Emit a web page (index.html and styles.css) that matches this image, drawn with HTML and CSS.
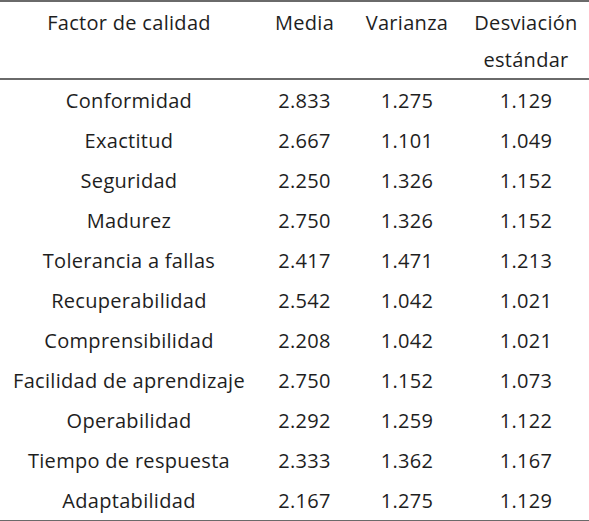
FILE: index.html
```html
<!DOCTYPE html>
<html lang="es">
<head>
<meta charset="utf-8">
<link rel="stylesheet" href="styles.css">
</head>
<body>
<table class="stats">
  <colgroup>
    <col class="c1"><col class="c2"><col class="c3"><col class="c4">
  </colgroup>
  <thead>
    <tr><th>Factor de calidad</th><th>Media</th><th>Varianza</th><th>Desviación estándar</th></tr>
  </thead>
  <tbody>
    <tr><td>Conformidad</td><td>2.833</td><td>1.275</td><td>1.129</td></tr>
    <tr><td>Exactitud</td><td>2.667</td><td>1.101</td><td>1.049</td></tr>
    <tr><td>Seguridad</td><td>2.250</td><td>1.326</td><td>1.152</td></tr>
    <tr><td>Madurez</td><td>2.750</td><td>1.326</td><td>1.152</td></tr>
    <tr><td>Tolerancia a fallas</td><td>2.417</td><td>1.471</td><td>1.213</td></tr>
    <tr><td>Recuperabilidad</td><td>2.542</td><td>1.042</td><td>1.021</td></tr>
    <tr><td>Comprensibilidad</td><td>2.208</td><td>1.042</td><td>1.021</td></tr>
    <tr><td>Facilidad de aprendizaje</td><td>2.750</td><td>1.152</td><td>1.073</td></tr>
    <tr><td>Operabilidad</td><td>2.292</td><td>1.259</td><td>1.122</td></tr>
    <tr><td>Tiempo de respuesta</td><td>2.333</td><td>1.362</td><td>1.167</td></tr>
    <tr><td>Adaptabilidad</td><td>2.167</td><td>1.275</td><td>1.129</td></tr>
  </tbody>
</table>
</body>
</html>
```
FILE: styles.css
```css
html, body { margin: 0; padding: 0; background: #fff; }
.stats {
  width: 589px;
  border-collapse: separate;
  border-spacing: 0;
  table-layout: fixed;
  font-family: "Open Sans", "Noto Sans", sans-serif;
  font-size: 20px;
  letter-spacing: 0.3px;
  color: #1e1e1e;
  border-top: 2px solid #6a6a6a;
  border-bottom: 2px solid #6a6a6a;
}
.c1 { width: 258px; }
.c2 { width: 93px; }
.c3 { width: 112px; }
.c4 { width: 126px; }
.stats th {
  font-weight: normal;
  text-align: center;
  vertical-align: top;
  line-height: 37px;
  padding: 2px 4px 0;
  height: 36px;
  border-bottom: 2px solid #6a6a6a;
}
.stats td {
  text-align: center;
  line-height: 38px;
  padding: 2px 0 0;
  white-space: nowrap;
}
```
